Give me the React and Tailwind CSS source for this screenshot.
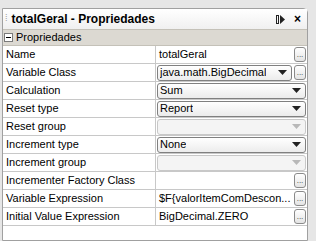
function Dots() {
  return (
    <button className="ml-[2px] flex h-[15px] w-[12px] shrink-0 items-end justify-center rounded-[3px] border border-[#8a8a8a] bg-gradient-to-b from-white to-[#e4e4e4] pb-[2px] text-[8px] leading-none text-[#333]">
      ...
    </button>
  );
}

function Combo({ value, disabled }) {
  return (
    <div
      className={
        "flex h-[16px] min-w-0 flex-1 items-center justify-between rounded-[3px] border pl-[2px] pr-[4px] " +
        (disabled ? "border-[#c8c8c8] bg-[#f4f4f4]" : "border-[#808080] bg-gradient-to-b from-white to-[#ececec]")
      }
    >
      <span className="overflow-hidden whitespace-nowrap">{value}</span>
      <svg width="9" height="5" viewBox="0 0 9 5" className="shrink-0">
        <path d="M0 0h9L4.5 5z" fill={disabled ? "#b8b8b8" : "#222"} />
      </svg>
    </div>
  );
}

const rows = [
  { label: "Name", kind: "text", value: "totalGeral", dots: true },
  { label: "Variable Class", kind: "combo", value: "java.math.BigDecimal", dots: true },
  { label: "Calculation", kind: "combo", value: "Sum" },
  { label: "Reset type", kind: "combo", value: "Report" },
  { label: "Reset group", kind: "combo", value: "", disabled: true },
  { label: "Increment type", kind: "combo", value: "None" },
  { label: "Increment group", kind: "combo", value: "", disabled: true },
  { label: "Incrementer Factory Class", kind: "text", value: "", dots: true },
  { label: "Variable Expression", kind: "text", value: "$F{valorItemComDescon...", dots: true },
  { label: "Initial Value Expression", kind: "text", value: "BigDecimal.ZERO", dots: true },
];

export default function App() {
  return (
    <div className="h-[241px] w-[316px] overflow-hidden bg-[#e6e6e6] pt-[8px] text-[11px] text-black" style={{ fontFamily: "'Liberation Sans', Arial, sans-serif" }}>
      <div className="ml-[2px] mr-[8px] h-full rounded-tr-[5px] border border-[#a0a0a0] bg-white">
        <div className="flex h-[20px] items-center bg-gradient-to-b from-white to-[#f0f0f0] pl-[2px] pr-[6px]">
          <span className="mr-[4px] text-[9px] text-[#999]">⁞</span>
          <span className="flex-1 text-[12px] font-bold">totalGeral - Propriedades</span>
          <svg width="10" height="9" viewBox="0 0 10 9" className="mr-[8px]">
            <rect x="0.5" y="0.5" width="2" height="8" fill="none" stroke="#222" />
            <path d="M4 0v9l5-4.5z" fill="#222" />
          </svg>
          <span className="text-[12px] font-bold leading-none">×</span>
        </div>
        <div className="flex h-[17px] items-center border-y border-[#c4c1b8] bg-[#dcd9d2] pl-[1px]">
          <span className="mr-[3px] flex h-[9px] w-[9px] items-center justify-center border border-[#7a7a7a] bg-white">
            <span className="h-px w-[5px] bg-black" />
          </span>
          <span>Propriedades</span>
        </div>
        {rows.map((r) => (
          <div key={r.label} className="flex h-[18px] border-b border-[#c8c8c8]">
            <div className="flex w-[153px] shrink-0 items-center border-r border-[#c8c8c8] pl-[3px]">{r.label}</div>
            <div className="flex min-w-0 flex-1 items-center pl-[1px] pr-[1px]">
              {r.kind === "combo" ? (
                <Combo value={r.value} disabled={r.disabled} />
              ) : (
                <span className="min-w-0 flex-1 overflow-hidden whitespace-nowrap pl-[2px]">{r.value}</span>
              )}
              {r.dots && <Dots />}
            </div>
          </div>
        ))}
      </div>
    </div>
  );
}
